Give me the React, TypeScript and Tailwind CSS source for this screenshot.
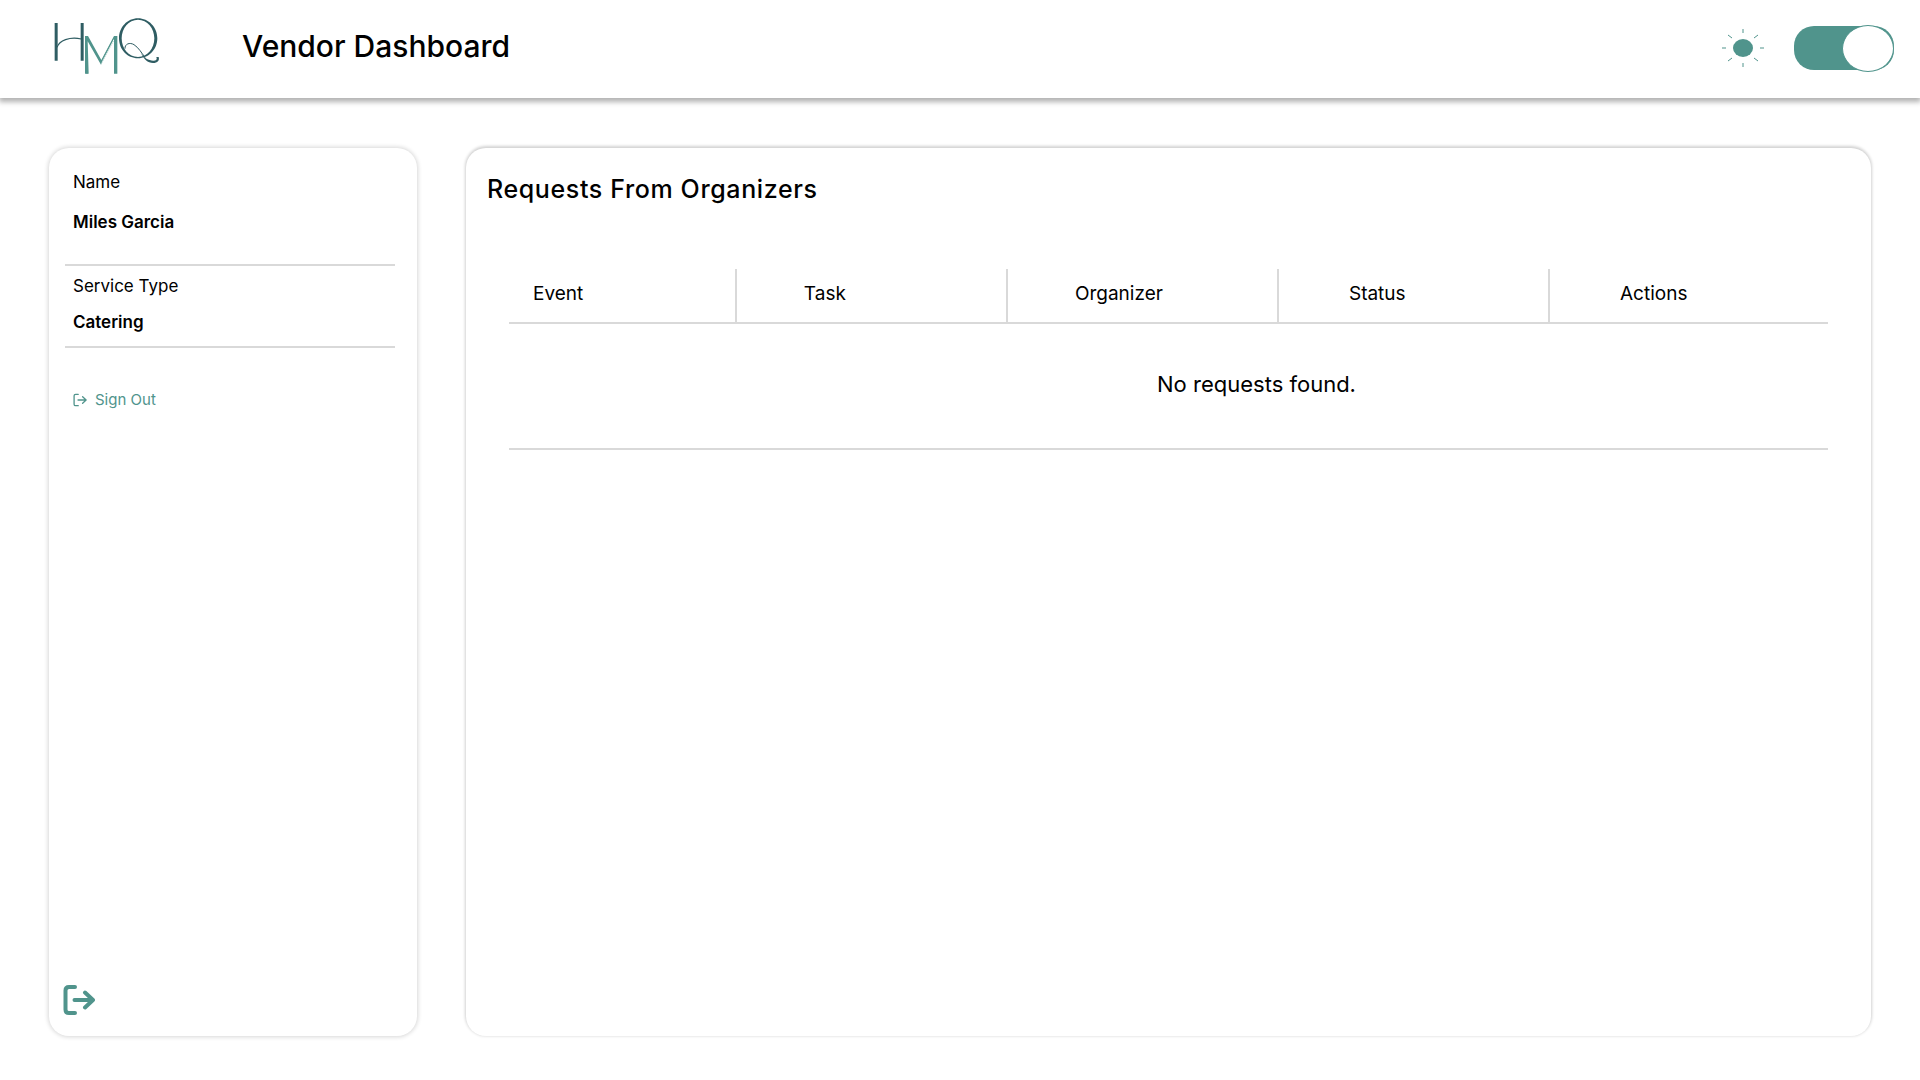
import { useState } from "react";

const columns = [
  { label: "Event", pad: "pl-6" },
  { label: "Task", pad: "pl-[67px]" },
  { label: "Organizer", pad: "pl-[67px]" },
  { label: "Status", pad: "pl-[70px]" },
  { label: "Actions", pad: "pl-[70px]" },
];

function Logo() {
  return (
    <svg viewBox="72 54 318 171" className="h-[57px] w-[106px]" fill="none" role="img" aria-label="HMQ">
      <path d="M78.500 69V182M156.500 69V182" stroke="#2f5d63" strokeWidth="9" />
      <path d="M81 142C88 122 118 109 154 117" stroke="#2f5d63" strokeWidth="3.500" />
      <path d="M165 108H174L214 180L252 108H262V221H252V121L213 194L173 124L176 221H165Z" fill="#50948c" />
      <path d="M168 124L171 221" stroke="#50948c" strokeWidth="4" />
      <path d="M217 180L252 115V121L213 194Z" fill="#ffffff" />
      <path d="M213 188L252 113" stroke="#50948c" strokeWidth="3" />
      <path
        fillRule="evenodd"
        fill="#2f5d63"
        d="M324 55C356 55 382 82 382 115C382 149 356 175 324 175C292 175 267 149 267 115C267 82 292 55 324 55ZM324 59C296 59 275 84 275 115C275 146 296 171 324 171C352 171 373 146 373 115C373 84 352 59 324 59Z"
      />
      <path d="M285 146C284 132 299 126 312 134C326 143 334 158 345 172" stroke="#2f5d63" strokeWidth="3" />
      <path d="M332 157C342 175 356 182 370 182C379 182 382 178 379 171H386C389 182 383 189 369 189C353 189 341 178 332 157Z" fill="#2f5d63" />
    </svg>
  );
}

function Sun() {
  return (
    <svg viewBox="0 0 42 38" className="h-[38px] w-[42px]" fill="none" stroke="#50948c" aria-hidden="true">
      <ellipse cx="21" cy="19" rx="10" ry="9" fill="#50948c" stroke="none" />
      <path d="M21 0V4M21 34V38M6 6L10 9M36 6L32 9M6 32L10 29M36 32L32 29" strokeWidth="1" />
      <path d="M0 19H4M38 19H42" strokeWidth="2" opacity="0.5" />
    </svg>
  );
}

function ExitIcon({ className, weight }: { className: string; weight: number }) {
  return (
    <svg
      viewBox="0 0 32 32"
      className={className}
      fill="none"
      stroke="currentColor"
      strokeWidth={weight}
      strokeLinecap="round"
      strokeLinejoin="round"
      aria-hidden="true"
    >
      <path d="M12 3H6Q2.500 3 2.500 6.500V25.500Q2.500 29 6 29H12" />
      <path d="M11.500 16H30M22 8.500L30 16L22 23.500" />
    </svg>
  );
}

export default function App() {
  const [light, setLight] = useState(true);

  return (
    <div className="flex min-h-screen flex-col bg-white font-['Inter',sans-serif] text-black">
      <header className="flex h-[98px] items-center bg-white pr-[26px] pb-[6px] pl-[54px] shadow-[0_3px_5px_1px_rgba(0,0,0,0.3)]">
        <Logo />
        <h1 className="ml-[82px] text-[30px] leading-10 font-medium">Vendor Dashboard</h1>
        <div className="ml-auto flex items-center gap-[30px] pt-1">
          <Sun />
          <input
            type="checkbox"
            role="switch"
            aria-label="Light mode"
            checked={light}
            onChange={(e) => setLight(e.target.checked)}
            className="flex h-11 w-[100px] cursor-pointer appearance-none items-center rounded-[20px] bg-[#50948c] before:h-[47px] before:w-[52px] before:shrink-0 before:rounded-[50%] before:border before:border-[#50948c] before:bg-white before:content-[''] checked:justify-end"
          />
        </div>
      </header>

      <main className="flex flex-1 gap-[49px] pt-[50px] pr-[49px] pb-11 pl-[49px]">
        <aside className="flex w-[368px] shrink-0 flex-col rounded-[20px] bg-white px-4 pb-5 shadow-[0_0_4px_1px_rgba(0,0,0,0.16)]">
          <dl className="pr-[6px] text-[17px] leading-6">
            <div className="border-b-2 border-[#d9d9d9] pt-[22px] pb-[30px] pl-2">
              <dt>Name</dt>
              <dd className="mt-4 font-semibold">Miles Garcia</dd>
            </div>
            <div className="border-b-2 border-[#d9d9d9] pt-2 pb-3 pl-2">
              <dt>Service Type</dt>
              <dd className="mt-3 font-semibold">Catering</dd>
            </div>
          </dl>
          <button type="button" className="mt-10 ml-2 flex cursor-pointer items-center gap-2 self-start text-[15px] leading-6 text-[#50948c]">
            <ExitIcon className="size-[14px]" weight={3} />
            Sign Out
          </button>
          <button type="button" aria-label="Exit" className="mt-auto -ml-[2px] cursor-pointer self-start text-[#50948c]">
            <ExitIcon className="size-8" weight={4} />
          </button>
        </aside>

        <section className="min-w-0 flex-1 rounded-[20px] bg-white pr-[43px] pl-[43px] shadow-[0_-1px_3px_1px_rgba(0,0,0,0.18)]">
          <h2 className="-ml-[22px] pt-[25px] text-[25px] leading-8 font-medium tracking-wide">Requests From Organizers</h2>
          <table className="mt-16 w-full table-fixed border-collapse text-left">
            <colgroup>
              <col className="w-[17.2%]" />
              <col className="w-[20.550%]" />
              <col className="w-[20.550%]" />
              <col className="w-[20.550%]" />
              <col />
            </colgroup>
            <thead>
              <tr className="border-b-2 border-[#d9d9d9]">
                {columns.map((c) => (
                  <th key={c.label} scope="col" className={`h-[54px] border-r-2 border-[#d9d9d9] pb-1 text-[19px] leading-6 font-normal last:border-r-0 ${c.pad}`}>
                    {c.label}
                  </th>
                ))}
              </tr>
            </thead>
            <tbody>
              <tr className="border-b-2 border-[#d9d9d9]">
                <td colSpan={5} className="h-[126px] pb-1 pl-44 text-center text-[22px] leading-8">
                  No requests found.
                </td>
              </tr>
            </tbody>
          </table>
        </section>
      </main>
    </div>
  );
}
